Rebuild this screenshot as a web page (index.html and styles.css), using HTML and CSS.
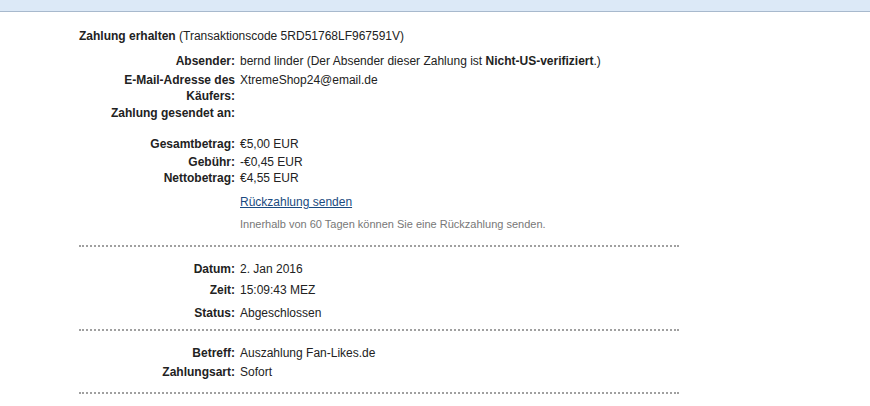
FILE: index.html
```html
<!DOCTYPE html>
<html lang="de">
<head>
<meta charset="utf-8">
<title>Zahlung erhalten</title>
<link rel="stylesheet" href="styles.css">
</head>
<body>
<div class="topbar"></div>
<main class="content">
  <h1 class="title"><strong>Zahlung erhalten</strong> (Transaktionscode 5RD51768LF967591V)</h1>

  <section class="block block-first">
    <div class="row r-absender"><span class="label">Absender:</span><span class="value">bernd linder (Der Absender dieser Zahlung ist <strong>Nicht-US-verifiziert</strong>.)</span></div>
    <div class="row r-email"><span class="label">E-Mail-Adresse des Käufers:</span><span class="value">XtremeShop24@email.de</span></div>
    <div class="row r-an"><span class="label">Zahlung gesendet an:</span><span class="value"></span></div>
    <div class="row r-gesamt"><span class="label">Gesamtbetrag:</span><span class="value">€5,00 EUR</span></div>
    <div class="row r-gebuehr"><span class="label">Gebühr:</span><span class="value">-€0,45 EUR</span></div>
    <div class="row r-netto"><span class="label">Nettobetrag:</span><span class="value">€4,55 EUR</span></div>
    <div class="row r-link"><span class="label"></span><span class="value"><a href="#" class="link">Rückzahlung senden</a></span></div>
    <div class="row r-hint"><span class="label"></span><span class="value hint">Innerhalb von 60 Tagen können Sie eine Rückzahlung senden.</span></div>
  </section>

  <section class="block block-date">
    <div class="row r-datum"><span class="label">Datum:</span><span class="value">2. Jan 2016</span></div>
    <div class="row r-zeit"><span class="label">Zeit:</span><span class="value">15:09:43 MEZ</span></div>
    <div class="row r-status"><span class="label">Status:</span><span class="value">Abgeschlossen</span></div>
  </section>

  <section class="block block-subject">
    <div class="row r-betreff"><span class="label">Betreff:</span><span class="value">Auszahlung Fan-Likes.de</span></div>
    <div class="row r-art"><span class="label">Zahlungsart:</span><span class="value">Sofort</span></div>
  </section>
</main>
</body>
</html>
```

FILE: styles.css
```css
html, body {
  margin: 0;
  padding: 0;
  background: #ffffff;
}

body {
  font-family: "Liberation Sans", Arial, sans-serif;
  font-size: 12px;
  line-height: 16px;
  color: #222222;
}

.topbar {
  height: 11px;
  background: #dce9f7;
  border-bottom: 1px solid #a8b9cd;
}

.content {
  margin-left: 79px;
  width: 600px;
}

.title {
  margin: 16px 0 0 0;
  font-size: 12px;
  font-weight: normal;
  line-height: 16px;
}

.title strong {
  font-weight: bold;
}

.block {
  border-bottom: 2px dotted #a0a0a0;
}

.block-first {
  padding-top: 9px;
  padding-bottom: 13px;
}

.block-date {
  padding-top: 14px;
  padding-bottom: 8px;
}

.block-subject {
  padding-top: 14px;
  padding-bottom: 12px;
}

.row {
  display: grid;
  grid-template-columns: 125px 1fr;
  column-gap: 5px;
  padding-left: 31px;
}

.label {
  font-weight: bold;
  text-align: right;
}

.value strong {
  font-weight: bold;
}

.r-email { margin-top: 3px; }
.r-an { margin-top: 1px; }
.r-gesamt { margin-top: 15px; }
.r-gebuehr { margin-top: 2px; }
.r-netto { margin-top: 0; }
.r-link { margin-top: 8px; }
.r-hint { margin-top: 6px; }

.r-zeit { margin-top: 5px; }
.r-status { margin-top: 7px; }

.r-art { margin-top: 3px; }

.link {
  color: #1a4a80;
  text-decoration: underline;
}

.hint {
  font-size: 11px;
  color: #777777;
}
```
